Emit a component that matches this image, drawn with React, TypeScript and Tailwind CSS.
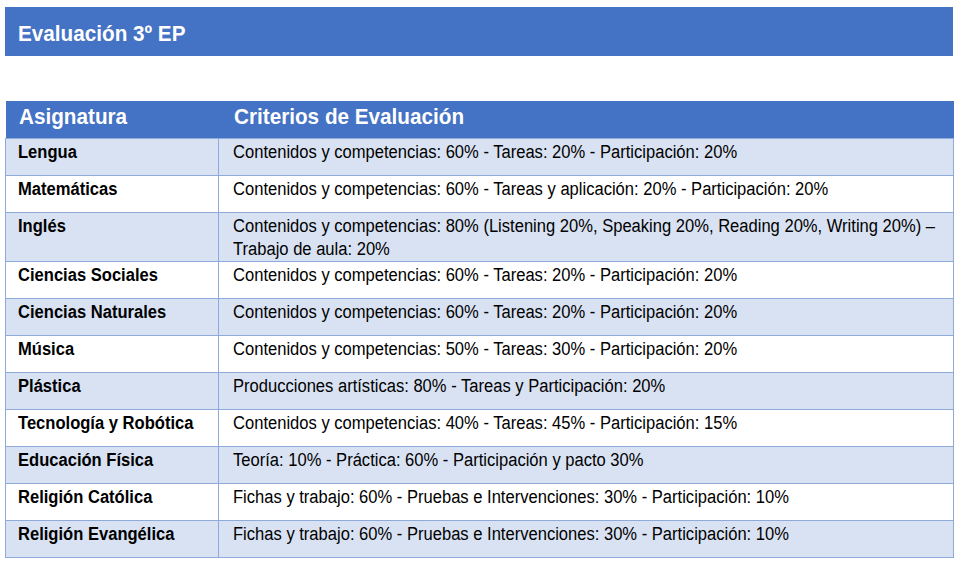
import React from "react";

const rows: { subject: string; criteria: string }[] = [
  { subject: "Lengua", criteria: "Contenidos y competencias: 60% - Tareas: 20% - Participación: 20%" },
  { subject: "Matemáticas", criteria: "Contenidos y competencias: 60% - Tareas y aplicación: 20% - Participación: 20%" },
  {
    subject: "Inglés",
    criteria:
      "Contenidos y competencias: 80% (Listening 20%, Speaking 20%, Reading 20%, Writing 20%) – Trabajo de aula: 20%",
  },
  { subject: "Ciencias Sociales", criteria: "Contenidos y competencias: 60% - Tareas: 20% - Participación: 20%" },
  { subject: "Ciencias Naturales", criteria: "Contenidos y competencias: 60% - Tareas: 20% - Participación: 20%" },
  { subject: "Música", criteria: "Contenidos y competencias: 50% - Tareas: 30% - Participación: 20%" },
  { subject: "Plástica", criteria: "Producciones artísticas: 80% - Tareas y Participación: 20%" },
  { subject: "Tecnología y Robótica", criteria: "Contenidos y competencias: 40% - Tareas: 45% - Participación: 15%" },
  { subject: "Educación Física", criteria: "Teoría: 10% - Práctica: 60% - Participación y pacto 30%" },
  { subject: "Religión Católica", criteria: "Fichas y trabajo: 60% - Pruebas e Intervenciones: 30% - Participación: 10%" },
  { subject: "Religión Evangélica", criteria: "Fichas y trabajo: 60% - Pruebas e Intervenciones: 30% - Participación: 10%" },
];

// narrow look: Arial metrics squeezed horizontally
const narrow = "origin-left scale-x-[0.92]";

export default function App() {
  return (
    <div className="w-[961px] h-[564px] bg-white pt-[7px] px-[5px] [font-family:'Liberation_Sans',Arial,sans-serif]">
      <div className="w-[948px] h-[49px] bg-[#4472c4] pl-[13px] pt-[13px]">
        <h1 className={`text-white font-bold text-[22.5px] leading-[28px] whitespace-nowrap ${narrow}`}>
          Evaluación 3º EP
        </h1>
      </div>

      <table className="mt-[45px] w-[949px] border-collapse table-fixed">
        <colgroup>
          <col className="w-[213px]" />
          <col />
        </colgroup>
        <thead>
          <tr className="bg-[#4472c4] h-[37px] text-white text-left">
            <th className="pl-[13px] pt-[2px] align-top font-bold text-[22.5px] leading-[28px]">
              <div className={`whitespace-nowrap ${narrow}`}>Asignatura</div>
            </th>
            <th className="pl-[15px] pt-[2px] align-top font-bold text-[22.5px] leading-[28px]">
              <div className={`whitespace-nowrap ${narrow}`}>Criterios de Evaluación</div>
            </th>
          </tr>
        </thead>
        <tbody>
          {rows.map((r, i) => (
            <tr key={r.subject} className={i % 2 === 0 ? "bg-[#d9e2f3]" : "bg-white"}>
              <td className="h-[37px] align-top border border-[#8eaadb] pl-[12px] pt-[2px] text-[18px] leading-[23px] font-bold text-black">
                <div className={`whitespace-nowrap ${narrow}`}>{r.subject}</div>
              </td>
              <td className="h-[37px] align-top border border-[#8eaadb] pl-[14px] pt-[2px] pr-[12px] text-[18px] leading-[23px] text-black">
                <div className={`w-[772px] ${narrow}`}>{r.criteria}</div>
              </td>
            </tr>
          ))}
        </tbody>
      </table>
    </div>
  );
}
